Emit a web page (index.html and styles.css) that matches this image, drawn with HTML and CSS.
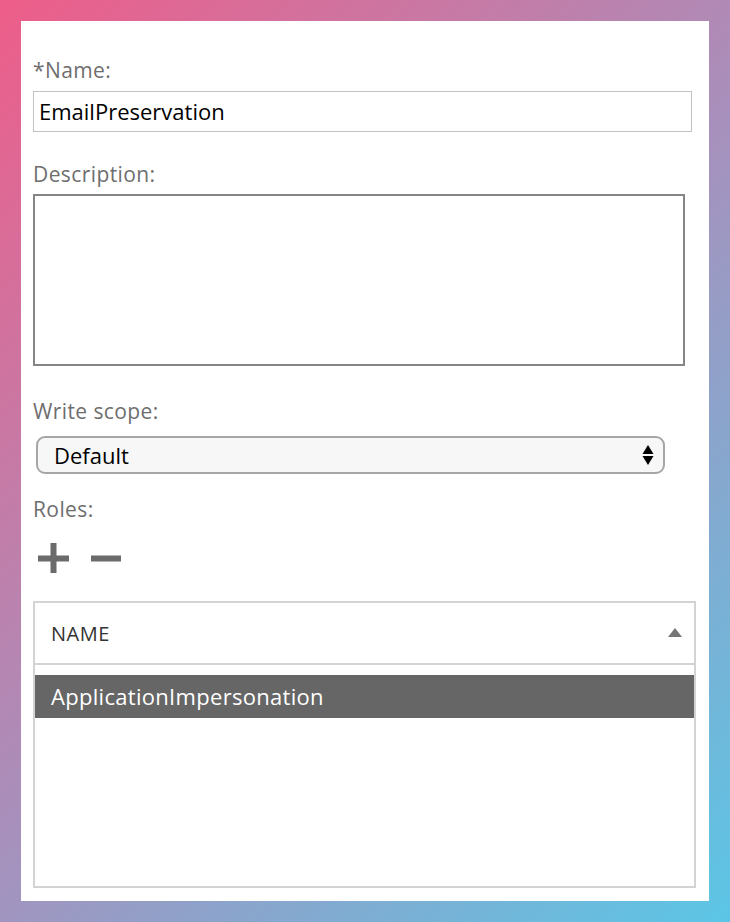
FILE: index.html
```html
<!DOCTYPE html>
<html>
<head>
<meta charset="utf-8">
<link rel="stylesheet" href="styles.css">
</head>
<body>
<div class="panel">
  <div class="label label-name">*Name:</div>
  <div class="textbox">EmailPreservation</div>
  <div class="label label-desc">Description:</div>
  <div class="textarea"></div>
  <div class="label label-scope">Write scope:</div>
  <div class="select">
    <span class="select-value">Default</span>
    <svg class="select-arrows" width="12" height="22" viewBox="0 0 12 22">
      <polygon points="6,1 11.5,10 0.5,10" fill="#000"/>
      <polygon points="0.5,12 11.5,12 6,21" fill="#000"/>
    </svg>
  </div>
  <div class="label label-roles">Roles:</div>
  <div class="toolbar">
    <svg class="tool" width="32" height="32" viewBox="0 0 32 32">
      <rect x="0" y="12.5" width="31" height="6" fill="#6b6b6b"/>
      <rect x="12.5" y="0" width="6" height="30" fill="#6b6b6b"/>
    </svg>
    <svg class="tool" width="30" height="32" viewBox="0 0 30 32">
      <rect x="0" y="12.5" width="30" height="6" fill="#6b6b6b"/>
    </svg>
  </div>
  <div class="grid">
    <div class="grid-header">
      <span class="col-name">NAME</span>
      <svg class="sort" width="14" height="9" viewBox="0 0 14 9">
        <polygon points="7,0 14,9 0,9" fill="#767676"/>
      </svg>
    </div>
    <div class="grid-body">
      <div class="row selected">ApplicationImpersonation</div>
    </div>
  </div>
</div>
</body>
</html>
```
FILE: styles.css
```css
html, body {
  margin: 0;
  padding: 0;
}
body {
  width: 730px;
  height: 922px;
  overflow: hidden;
  background: linear-gradient(135deg, #ee5d89 0%, #a98fbb 50%, #5bc6e6 100%);
  font-family: "Open Sans", "Noto Sans", sans-serif;
}
.panel {
  margin: 21px 0 0 21px;
  width: 688px;
  height: 880px;
  background: #fff;
  box-sizing: border-box;
  padding: 0 0 0 12px;
  display: flex;
  flex-direction: column;
  align-items: flex-start;
}
.label {
  color: #6e6e6e;
  font-size: 21px;
  line-height: 24px;
  height: 24px;
  letter-spacing: 0.4px;
}
.label-name { margin-top: 37px; }
.textbox {
  margin-top: 9px;
  width: 659px;
  height: 41px;
  box-sizing: border-box;
  border: 1px solid #c2c2c2;
  font-size: 22px;
  line-height: 39px;
  padding-left: 5px;
  color: #000;
}
.label-desc { margin-top: 30px; }
.textarea {
  margin-top: 8px;
  width: 652px;
  height: 172px;
  box-sizing: border-box;
  border: 2px solid #858585;
}
.label-scope { margin-top: 33px; }
.select {
  margin: 13px 0 0 3px;
  width: 629px;
  height: 38px;
  box-sizing: border-box;
  border: 2px solid #a6a6a6;
  border-radius: 9px;
  background: #f7f7f7;
  display: flex;
  align-items: center;
  justify-content: space-between;
  padding: 0 9px 0 16px;
}
.select-value {
  font-size: 22px;
  color: #000;
}
.select-arrows { display: block; }
.label-roles { margin-top: 23px; }
.toolbar {
  margin: 22px 0 0 5px;
  display: flex;
  gap: 21px;
}
.tool { display: block; }
.grid {
  margin-top: 26px;
  width: 663px;
  height: 287px;
  box-sizing: border-box;
  border: 2px solid #d3d3d3;
}
.grid-header {
  height: 62px;
  box-sizing: border-box;
  border-bottom: 2px solid #d3d3d3;
  display: flex;
  align-items: center;
  justify-content: space-between;
  padding: 0 12px 0 16px;
}
.col-name {
  font-size: 20px;
  color: #333;
  letter-spacing: 0.5px;
}
.sort { display: block; margin-top: -2px; }
.grid-body {
  padding-top: 10px;
}
.row {
  height: 43px;
  line-height: 43px;
  padding-left: 16px;
  font-size: 22px;
  letter-spacing: 0.3px;
}
.row.selected {
  background: #666;
  color: #fff;
}
```
